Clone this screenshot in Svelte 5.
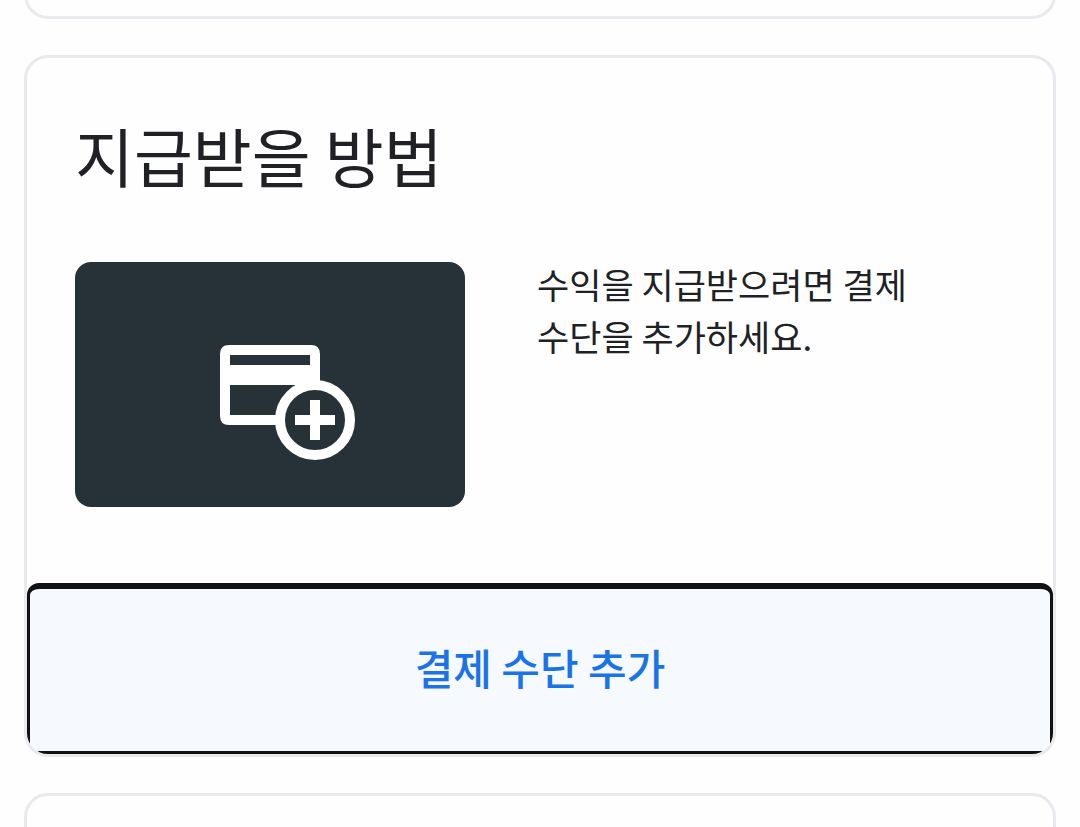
<script>
  const title = '지급받을 방법';
  const message = '수익을 지급받으려면 결제 수단을 추가하세요.';
  const action = '결제 수단 추가';
</script>

<main>
  <section class="card previous"></section>

  <section class="card" aria-labelledby="payout-title">
    <div class="content">
      <h2 id="payout-title">{title}</h2>
      <div class="details">
        <div class="tile">
          <svg viewBox="0 0 136 116" width="136" height="116" aria-hidden="true">
            <path
              fill="#fff"
              fill-rule="evenodd"
              d="M9 0H91Q100 0 100 9V37L96 55L62 80H9Q0 80 0 71V9Q0 0 9 0ZM10 10V20H90V10ZM10 40V70H60V40Z"
            />
            <path fill="#263238" d="M60 40H76L60 56Z" />
            <circle cx="95" cy="75" r="35" fill="#263238" stroke="#fff" stroke-width="10" />
            <path fill="#fff" d="M90 55H100V70H115V80H100V95H90V80H75V70H90Z" />
          </svg>
        </div>
        <p>{message}</p>
      </div>
    </div>
    <button type="button">{action}</button>
  </section>

  <section class="card next"></section>
</main>

<style>
  :global(body) {
    margin: 0;
    background: #fefefe;
  }

  main {
    box-sizing: border-box;
    height: 100vh;
    overflow: hidden;
    padding: 0 24px;
    display: flex;
    flex-direction: column;
    gap: 36px;
    color: #202124;
    font-family: 'Noto Sans CJK KR', sans-serif;
  }

  .card {
    flex-shrink: 0;
    overflow: hidden;
    border: 3px solid #e8eaed;
    border-radius: 24px;
    background: #fefefe;
  }

  .previous {
    height: 40px;
    margin-top: -24px;
    border-top: 0;
    border-radius: 0 0 24px 24px;
  }

  .next {
    flex: 1 0 24px;
    border-bottom: 0;
    border-radius: 24px 24px 0 0;
  }

  .content {
    padding: 56px 48px 76px;
  }

  h2 {
    margin: 0 0 68px;
    font-size: 64px;
    line-height: 80px;
    font-weight: 400;
  }

  .details {
    display: flex;
    align-items: flex-start;
    gap: 72px;
  }

  .tile {
    box-sizing: border-box;
    flex: 0 0 390px;
    height: 245px;
    padding: 36px 0 0 36px;
    display: flex;
    align-items: center;
    justify-content: center;
    border-radius: 16px;
    background: #263238;
  }

  p {
    flex: 1;
    max-width: 420px;
    margin: -4px 0 0;
    font-size: 35px;
    line-height: 52px;
    word-break: keep-all;
  }

  button {
    display: block;
    width: 100%;
    padding: 48px 24px 54px;
    border: 3px solid #111;
    border-top-width: 6px;
    border-radius: 12px 12px 0 0;
    background: #f6f9fe;
    color: #1a73e8;
    font: inherit;
    font-size: 42px;
    line-height: 60px;
    font-weight: 500;
    cursor: pointer;
  }
</style>
